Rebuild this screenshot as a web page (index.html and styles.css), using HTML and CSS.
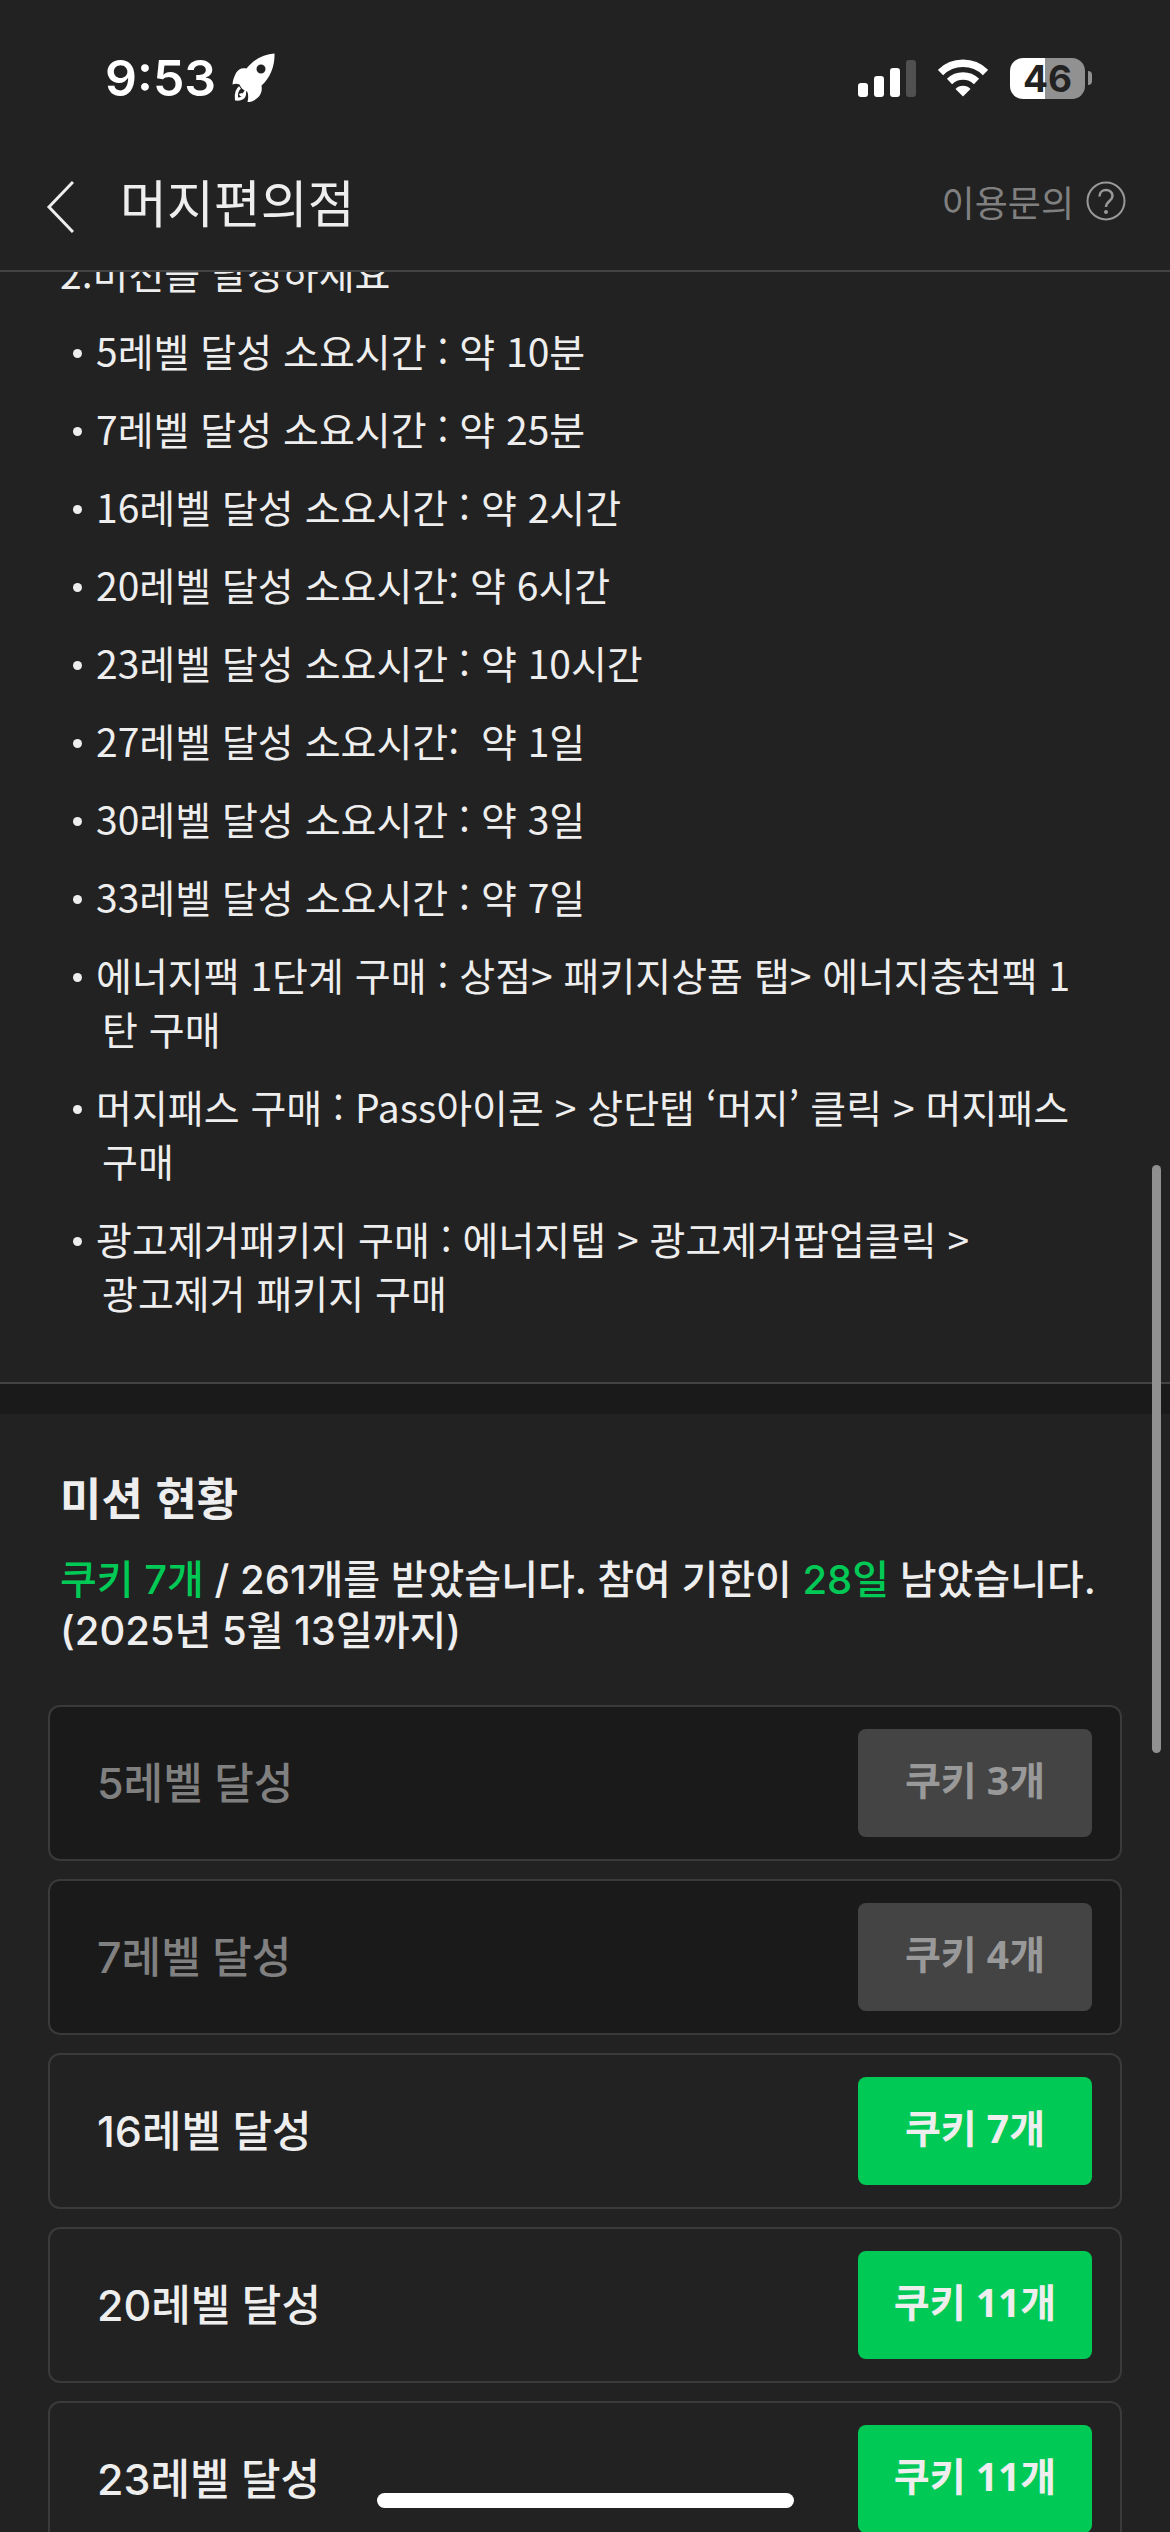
FILE: index.html
```html
<!DOCTYPE html>
<html lang="ko">
<head>
<meta charset="utf-8">
<meta name="viewport" content="width=device-width, initial-scale=1">
<title>머지편의점</title>
<link rel="stylesheet" href="styles.css">
</head>
<body>
<div class="app">
  <div class="top">
    <div class="status">
      <div class="status-left">
        <span class="time">9:53</span>
        <svg class="rocket" viewBox="0 0 44 50" aria-hidden="true">
          <path fill="#fff" fill-rule="evenodd" d="M42.500 .5C32 1 22 6 14.500 15.500C10 14.500 6.500 15.500 4 20C2 24 .5 28 .5 31.500C3 30.500 5.500 30.500 7.500 31.500C9 35 11.500 37.500 15 38.500C16.500 41 16.500 45 15.500 49C20 49 25 46.500 28 42C30 38.500 30 35.500 29.500 32.500C38 25 43 13 42.500 .5ZM29 11.500A4.500 4.500 0 1 1 29 20.500A4.500 4.500 0 1 1 29 11.500Z"/>
          <path fill="none" stroke="#fff" stroke-width="3.200" d="M8 34.500C4.500 37 4 41 4.500 46C9 46.500 12.500 44.500 12.500 40.500C11 42.500 9 42.500 8.500 40.500"/>
        </svg>
      </div>
      <div class="status-right">
        <svg class="signal" viewBox="0 0 58 37" aria-hidden="true">
          <rect x="0" y="23" width="10" height="14" rx="3" fill="#fff"/>
          <rect x="16" y="16" width="10" height="21" rx="3" fill="#fff"/>
          <rect x="32" y="8" width="10" height="29" rx="3" fill="#fff"/>
          <rect x="48" y="0" width="10" height="37" rx="3" fill="#505050"/>
        </svg>
        <svg class="wifi" viewBox="0 0 50 38" aria-hidden="true">
          <path d="M2.500 13.500A32 32 0 0 1 47.500 13.500" fill="none" stroke="#fff" stroke-width="7.500"/>
          <path d="M11.500 22.500A19.500 19.500 0 0 1 38.500 22.500" fill="none" stroke="#fff" stroke-width="7.500"/>
          <path d="M25 37.500L17.500 30A10.500 10.500 0 0 1 32.500 30Z" fill="#fff"/>
        </svg>
        <div class="battery"><span class="battery-body">46</span><span class="battery-cap"></span></div>
      </div>
    </div>
    <header class="nav">
      <a class="back" href="#" aria-label="뒤로">
        <svg viewBox="0 0 28 52" aria-hidden="true"><path d="M27 1L3 26L27 51" fill="none" stroke="#eee" stroke-width="3"/></svg>
      </a>
      <h1 class="nav-title">머지편의점</h1>
      <a class="help" href="#">이용문의
        <svg viewBox="0 0 40 40" aria-hidden="true">
          <circle cx="20" cy="20" r="18.500" fill="none" stroke="#999" stroke-width="2"/>
          <path d="M13.500 15.500C13.500 7 26.500 7 26.500 15C26.500 20 20 20 20 26" fill="none" stroke="#999" stroke-width="2.500"/>
          <circle cx="20" cy="31" r="2" fill="#999"/>
        </svg>
      </a>
    </header>
  </div>

  <main class="scroll">
    <section class="guide">
      <h2 class="guide-title">2.미션을 달성하세요</h2>
      <ul class="guide-list">
        <li>5레벨 달성 소요시간 : 약 10분</li>
        <li>7레벨 달성 소요시간 : 약 25분</li>
        <li>16레벨 달성 소요시간 : 약 2시간</li>
        <li>20레벨 달성 소요시간: 약 6시간</li>
        <li>23레벨 달성 소요시간 : 약 10시간</li>
        <li>27레벨 달성 소요시간:&nbsp; 약 1일</li>
        <li>30레벨 달성 소요시간 : 약 3일</li>
        <li>33레벨 달성 소요시간 : 약 7일</li>
        <li>에너지팩 1단계 구매 : 상점&gt; 패키지상품 탭&gt; 에너지충천팩 1<br>탄 구매</li>
        <li>머지패스 구매 : Pass아이콘 &gt; 상단탭 ‘머지’ 클릭 &gt; 머지패스<br>구매</li>
        <li>광고제거패키지 구매 : 에너지탭 &gt; 광고제거팝업클릭 &gt;<br>광고제거 패키지 구매</li>
      </ul>
    </section>
    <section class="missions">
      <h2 class="missions-title">미션 현황</h2>
      <p class="summary"><em>쿠키 7개</em> / 261개를 받았습니다. 참여 기한이 <em>28일</em> 남았습니다.<br>(2025년 5월 13일까지)</p>
      <ul class="cards">
        <li class="card done"><span>5레벨 달성</span><button type="button" disabled>쿠키 3개</button></li>
        <li class="card done"><span>7레벨 달성</span><button type="button" disabled>쿠키 4개</button></li>
        <li class="card"><span>16레벨 달성</span><button type="button">쿠키 7개</button></li>
        <li class="card"><span>20레벨 달성</span><button type="button">쿠키 11개</button></li>
        <li class="card"><span>23레벨 달성</span><button type="button">쿠키 11개</button></li>
      </ul>
    </section>
  </main>
  <div class="scrollbar"></div>
  <div class="home-bar"></div>
</div>
</body>
</html>
```
FILE: styles.css
```css
* { box-sizing: border-box; }

body {
  margin: 0;
  background: #222;
  color: #eee;
  font-family: "Noto Sans CJK KR", sans-serif;
}

h1, h2, p, ul { margin: 0; padding: 0; font-weight: 400; }
ul { list-style: none; }
a { color: inherit; text-decoration: none; }
svg { display: block; }

.app {
  position: relative;
  display: flex;
  flex-direction: column;
  height: 100vh;
  overflow: hidden;
}

.top {
  flex: none;
  border-bottom: 2px solid #444;
}

/* status bar */
.status {
  display: flex;
  justify-content: space-between;
  align-items: center;
  height: 136px;
  padding: 20px 78px 0 105px;
}
.status-left, .status-right { display: flex; align-items: center; }
.status-left { gap: 16px; }
.status-right { gap: 22px; }
.time {
  color: #fff;
  font: 600 50px/60px Inter, sans-serif;
}
.rocket { width: 44px; height: 50px; }
.signal { width: 58px; height: 37px; }
.wifi { width: 50px; height: 38px; }
.battery { display: flex; align-items: center; gap: 3px; }
.battery-body {
  width: 75px;
  border-radius: 13px;
  background: linear-gradient(90deg, #fff 47%, #919191 47%);
  color: #222;
  font: 700 37px/41px Inter, sans-serif;
  text-align: center;
}
.battery-cap {
  width: 4px;
  height: 14px;
  border-radius: 0 4px 4px 0;
  background: #919191;
}

/* title bar */
.nav {
  display: flex;
  align-items: center;
  height: 134px;
  padding: 0 44px 4px 46px;
}
.back { padding-top: 12px; }
.back svg { width: 28px; height: 52px; }
.nav-title {
  flex: 1;
  margin-left: 46px;
  font-size: 51px;
  line-height: 74px;
}
.help {
  display: flex;
  align-items: center;
  gap: 12px;
  color: #808080;
  font-size: 36px;
  line-height: 54px;
}
.help svg { width: 40px; height: 40px; }

/* scrolled content */
.scroll {
  flex: 1;
  min-height: 0;
  overflow: hidden;
}
.guide {
  margin-top: -27px;
  padding: 0 60px 63px;
  border-bottom: 2px solid #444;
  font-size: 39px;
  line-height: 54px;
}
.guide-title { font-size: 39px; }
.guide-list li {
  position: relative;
  margin-top: 24px;
  padding-left: 42px;
  text-indent: -6px;
  white-space: nowrap;
}
.guide-list li::before {
  content: "";
  position: absolute;
  left: 13px;
  top: 26px;
  width: 9px;
  height: 9px;
  border-radius: 50%;
  background: #eee;
}

.missions {
  padding: 50px 48px 0;
  border-top: 30px solid #1a1a1a;
}
.missions-title {
  padding: 0 12px;
  font-size: 45px;
  font-weight: 700;
  line-height: 66px;
}
.summary {
  margin-top: 24px;
  padding: 0 12px;
  font-family: Inter, "Noto Sans CJK KR", sans-serif;
  font-size: 40px;
  font-weight: 500;
  line-height: 51px;
  white-space: nowrap;
}
.summary em { color: #00ca55; font-style: normal; }

.cards {
  display: flex;
  flex-direction: column;
  gap: 18px;
  margin-top: 49px;
}
.card {
  display: flex;
  align-items: center;
  justify-content: space-between;
  height: 156px;
  padding: 0 28px 0 47px;
  border: 2px solid #3a3a3a;
  border-radius: 12px;
  font-family: Inter, "Noto Sans CJK KR", sans-serif;
  font-size: 43px;
  font-weight: 500;
}
.card span { padding-bottom: 6px; }
.card button {
  width: 234px;
  height: 108px;
  padding: 0 0 6px;
  border: 0;
  border-radius: 8px;
  background: #00ca55;
  color: #eee;
  font: 700 39px/54px "Noto Sans", "Noto Sans CJK KR", sans-serif;
}
.card.done { background: #1a1a1a; color: #808080; }
.card.done button { background: #444; color: #999; }

/* overlays */
.scrollbar {
  position: absolute;
  top: 46%;
  right: 9px;
  width: 9px;
  height: 588px;
  border-radius: 5px;
  background: #909090;
}
.home-bar {
  position: absolute;
  bottom: 24px;
  left: 50%;
  width: 417px;
  height: 15px;
  margin-left: -208px;
  border-radius: 8px;
  background: #fff;
}
```
